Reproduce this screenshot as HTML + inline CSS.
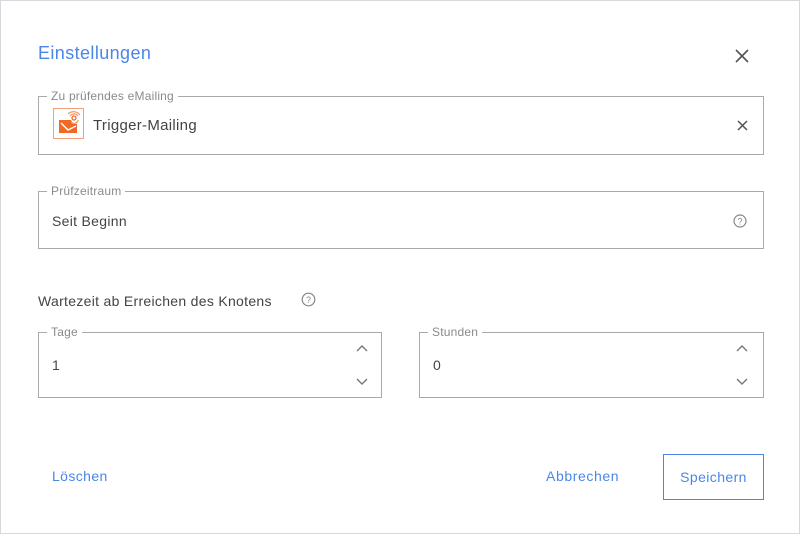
<!DOCTYPE html>
<html><head><style>
body{margin:0;width:800px;height:534px;background:#fff;font-family:"Liberation Sans",sans-serif;position:relative;overflow:hidden}
.frame{position:absolute;left:0;top:0;width:798px;height:532px;border:1px solid #d6d9de}
.a{position:absolute}
.box{position:absolute;border:1px solid #a9a9a9;box-sizing:border-box}
.lg{position:absolute;top:-8px;left:8px;background:#fff;padding:0 4px;font-size:12px;color:#8a8a8a;line-height:14px;letter-spacing:0.2px}
.v{position:absolute;font-size:14px;color:#444;letter-spacing:0.3px}
.blue{color:#4a86e8;letter-spacing:0.4px}
</style></head><body>
<div class="frame"></div>
<div class="a blue" style="left:38px;top:43px;font-size:18px">Einstellungen</div>
<svg class="a" style="left:735px;top:49px" width="14" height="14"><path d="M1 1L13 13M13 1L1 13" stroke="#555" stroke-width="1.6"/></svg>

<div class="box" style="left:38px;top:96px;width:726px;height:59px">
 <div class="lg">Zu prüfendes eMailing</div>
 <div class="a" style="left:14px;top:11px;width:31px;height:31px;border:1px solid #f0a07a;box-sizing:border-box">
  <svg width="29" height="29"><path d="M5 11H17L19 15H23V24H5Z" fill="#ef6a25"/><path d="M7 14L14 21L22 17" stroke="#fff" fill="none" stroke-width="1.4"/><circle cx="20" cy="9" r="2" fill="none" stroke="#ef6a25" stroke-width="1.3"/><path d="M16 7a5 5 0 0 1 8 0M14 5a8 8 0 0 1 12 1M17 13a4 4 0 0 0 7-2" stroke="#f29a6a" fill="none" stroke-width="1.3"/></svg>
 </div>
 <div class="v" style="left:54px;top:20px;font-size:15px">Trigger-Mailing</div>
 <svg class="a" style="left:698px;top:23px" width="11" height="11"><path d="M1 1L10 10M10 1L1 10" stroke="#555" stroke-width="1.5"/></svg>
</div>

<div class="box" style="left:38px;top:191px;width:726px;height:58px">
 <div class="lg">Prüfzeitraum</div>
 <div class="v" style="left:13px;top:21px">Seit Beginn</div>
 <svg class="a" style="left:694px;top:22px" width="14" height="14"><circle cx="7" cy="7" r="6" fill="none" stroke="#888" stroke-width="1.2"/><text x="7" y="10.5" font-size="9" text-anchor="middle" fill="#888" font-family="Liberation Sans">?</text></svg>
</div>

<div class="a" style="left:38px;top:293px;font-size:14px;color:#444;letter-spacing:0.3px">Wartezeit ab Erreichen des Knotens</div>
<svg class="a" style="left:301px;top:292px" width="15" height="15"><circle cx="7.5" cy="7.5" r="6.3" fill="none" stroke="#888" stroke-width="1.2"/><text x="7.5" y="11" font-size="9" text-anchor="middle" fill="#888" font-family="Liberation Sans">?</text></svg>

<div class="box" style="left:38px;top:332px;width:344px;height:66px">
 <div class="lg">Tage</div>
 <div class="v" style="left:13px;top:24px">1</div>
 <svg class="a" style="left:317px;top:12px" width="12" height="40"><path d="M1 6L6 1L11 6M1 34L6 39L11 34" stroke="#777" fill="none" stroke-width="1.4"/></svg>
</div>
<div class="box" style="left:419px;top:332px;width:345px;height:66px">
 <div class="lg">Stunden</div>
 <div class="v" style="left:13px;top:24px">0</div>
 <svg class="a" style="left:316px;top:12px" width="12" height="40"><path d="M1 6L6 1L11 6M1 34L6 39L11 34" stroke="#777" fill="none" stroke-width="1.4"/></svg>
</div>

<div class="a blue" style="left:52px;top:468px;font-size:14px">Löschen</div>
<div class="a blue" style="left:546px;top:468px;font-size:14px;letter-spacing:0.6px">Abbrechen</div>
<div class="a blue" style="left:663px;top:454px;width:101px;height:46px;box-sizing:border-box;border:1px solid #4a86e8;font-size:14px;text-align:center;line-height:44px">Speichern</div>
</body></html>
